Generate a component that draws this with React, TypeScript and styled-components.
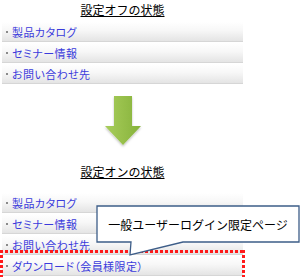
import React from "react";
import styled, { createGlobalStyle } from "styled-components";

const Global = createGlobalStyle`
  html, body { margin: 0; padding: 0; background: #fff; }
  body { width: 301px; height: 277px; overflow: hidden; font-family: "Noto Sans CJK JP", "Noto Sans", sans-serif; }
`;

const Page = styled.div`
  position: relative;
  width: 301px;
  height: 277px;
  overflow: hidden;
  display: flex;
  flex-direction: column;
`;

const Section = styled.div<{ $top: number }>`
  display: flex;
  flex-direction: column;
  padding-left: 2px;
  width: 241px;
  margin-top: ${(p) => p.$top}px;
`;

const Title = styled.div<{ $gap: number }>`
  text-align: center;
  font-size: 12px;
  line-height: 16px;
  color: #000;
  text-decoration: underline;
  text-underline-offset: 1px;
  margin-bottom: ${(p) => p.$gap}px;
`;

const Menu = styled.ul`
  list-style: none;
  margin: 0;
  padding: 0;
  display: flex;
  flex-direction: column;
  gap: 1px;
`;

const Item = styled.li<{ $marked?: boolean }>`
  position: relative;
  height: 19px;
  display: flex;
  align-items: center;
  gap: 4px;
  padding-left: 4px;
  background: linear-gradient(#ffffff 0%, #f7f7f7 45%, #e4e4e4 100%);
  border-bottom: 1px solid #d6d6d6;
  font-size: 11px;
  font-feature-settings: "palt";
  letter-spacing: 0.4px;
  color: #3b3bdc;
  white-space: nowrap;

  &::before {
    content: "";
    width: 2px;
    height: 2px;
    background: #8a8a8a;
    flex: none;
  }

  ${(p) =>
    p.$marked &&
    `
    &::after {
      content: "";
      position: absolute;
      left: -2px;
      right: -2px;
      top: -6px;
      bottom: -6px;
      background:
        repeating-linear-gradient(90deg, #ff1a1a 0 3px, transparent 3px 5px) top left / 100% 3px no-repeat,
        repeating-linear-gradient(90deg, #ff1a1a 0 3px, transparent 3px 5px) bottom left / 100% 3px no-repeat,
        repeating-linear-gradient(180deg, #ff1a1a 0 3px, transparent 3px 5px) top left / 3px 100% no-repeat,
        repeating-linear-gradient(180deg, #ff1a1a 0 3px, transparent 3px 5px) top right / 3px 100% no-repeat;
      pointer-events: none;
    }
  `}
`;

const ArrowWrap = styled.div`
  display: flex;
  justify-content: center;
  margin-top: 12px;
  margin-bottom: 14px;
  width: 241px;
  padding-left: 2px;
`;

const Callout = styled.div`
  position: absolute;
  left: 96px;
  top: 205px;
  width: 205px;
  height: 52px;
`;

const CalloutText = styled.span`
  position: absolute;
  left: 0;
  top: 1px;
  width: 204px;
  height: 36px;
  display: flex;
  align-items: center;
  justify-content: center;
  font-size: 12px;
  color: #000;
  white-space: nowrap;
`;

const Arrow = () => (
  <svg width="40" height="54" viewBox="0 0 40 54">
    <defs>
      <linearGradient id="ag" x1="0" y1="0" x2="1" y2="0">
        <stop offset="0" stopColor="#a8cd5c" />
        <stop offset="1" stopColor="#86b23a" />
      </linearGradient>
      <filter id="sh" x="-20%" y="-20%" width="140%" height="140%">
        <feDropShadow dx="0" dy="1.5" stdDeviation="1.2" floodColor="#000" floodOpacity="0.25" />
      </filter>
    </defs>
    <path d="M11 0 H29 V30 H38 L20 49 L2 30 H11 Z" fill="url(#ag)" filter="url(#sh)" />
  </svg>
);

const items = ["製品カタログ", "セミナー情報", "お問い合わせ先"];

export default function App() {
  return (
    <Page>
      <Global />
      <Section $top={2}>
        <Title $gap={4}>設定オフの状態</Title>
        <Menu>
          {items.map((t) => (
            <Item key={t}>{t}</Item>
          ))}
        </Menu>
      </Section>
      <ArrowWrap>
        <Arrow />
      </ArrowWrap>
      <Section $top={0}>
        <Title $gap={13}>設定オンの状態</Title>
        <Menu>
          {items.map((t) => (
            <Item key={t}>{t}</Item>
          ))}
          <Item $marked>ダウンロード（会員様限定）</Item>
        </Menu>
      </Section>
      <Callout>
        <svg width="205" height="52" viewBox="0 0 205 52">
          <path
            d="M1 1 H203 V37 H87 L34 50 L35 37 H1 Z"
            fill="#fff"
            stroke="#3d5d88"
            strokeWidth="1.3"
          />
        </svg>
        <CalloutText>一般ユーザーログイン限定ページ</CalloutText>
      </Callout>
    </Page>
  );
}
